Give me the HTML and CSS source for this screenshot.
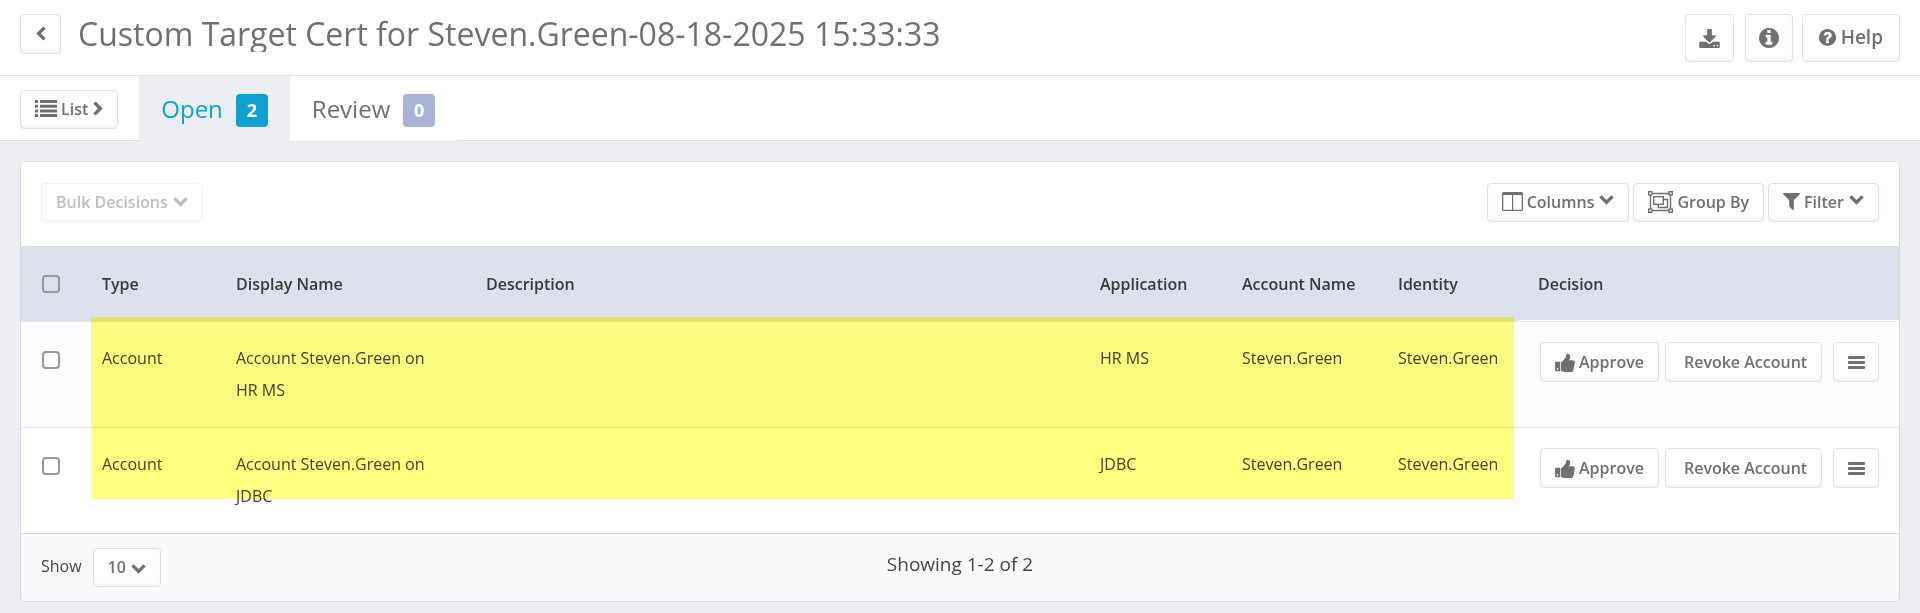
FILE: index.html
```html
<!DOCTYPE html>
<html lang="en">
<head>
<meta charset="UTF-8">
<meta name="viewport" content="width=device-width, initial-scale=1.0">
<title>Custom Target Cert for Steven.Green-08-18-2025 15:33:33</title>
<link rel="stylesheet" href="styles.css">
</head>
<body>

<!-- shared icons -->
<svg class="sprite" aria-hidden="true">
  <symbol id="chevron-down" viewBox="0 0 15 10"><path d="M0.3 2.6L2.6 0.3l4.9 4.8L12.4 0.3l2.3 2.3L7.5 9.8z"/></symbol>
  <symbol id="chevron-left" viewBox="0 0 10 15"><path d="M7.3 0.4L9.7 2.7 4.9 7.5l4.8 4.8-2.4 2.3L0.3 7.5z"/></symbol>
  <symbol id="chevron-right" viewBox="0 0 10 15"><path d="M2.7 0.4L0.3 2.7 5.1 7.5 0.3 12.3l2.4 2.3 7-7.1z"/></symbol>
  <symbol id="thumbs-up" viewBox="64 64 1600 1536"><path d="M320 1344q0-26-19-45t-45-19q-27 0-45.500 19t-18.500 45q0 27 18.500 45.500t45.500 18.500q26 0 45-18.500t19-45.500zm160-512v640q0 26-19 45t-45 19h-288q-26 0-45-19t-19-45v-640q0-26 19-45t45-19h288q26 0 45 19t19 45zm1184 0q0 86-55 149 15 44 15 76 3 76-43 137 17 56 0 117-15 57-54 94 9 112-49 181-64 76-197 78h-129q-66 0-144-15.500t-121.500-29-120.500-39.500q-123-43-158-44-26-1-45-19.500t-19-44.500v-641q0-25 18-43.500t43-20.500q24-2 76-59t101-121q68-87 101-120 18-18 31-48t17.500-48.500 13.500-60.500q7-39 12.500-61t19.500-52 34-50q19-19 45-19 46 0 82.500 10.500t60 26 40 40.500 24 45 12 50 5 45 .5 39q0 38-9.500 76t-19 60-27.500 56q-3 6-10 18t-11 22-8 24h277q78 0 135 57t57 135z"/></symbol>
  <symbol id="bars" viewBox="0 0 17 15"><rect y="1" width="17" height="3" rx="1"/><rect y="6" width="17" height="3" rx="1"/><rect y="11" width="17" height="3" rx="1"/></symbol>
</svg>

<header class="page-header">
  <button class="btn btn-back" aria-label="Back"><svg class="icon-chevron-side"><use href="#chevron-left"/></svg></button>
  <h1>Custom Target Cert for Steven.Green-08-18-2025 15:33:33</h1>
  <div class="header-actions">
    <button class="btn btn-header" aria-label="Download">
      <svg width="21" height="19" viewBox="64 0 1664 1536"><path d="M1344 1344q0-26-19-45t-45-19-45 19-19 45 19 45 45 19 45-19 19-45zm256 0q0-26-19-45t-45-19-45 19-19 45 19 45 45 19 45-19 19-45zm128-224v320q0 40-28 68t-68 28h-1472q-40 0-68-28t-28-68v-320q0-40 28-68t68-28h465l135 136q58 56 136 56t136-56l136-136h464q40 0 68 28t28 68zm-325-569q17 41-14 70l-448 448q-18 19-45 19t-45-19l-448-448q-31-29-14-70 17-39 59-39h256v-448q0-26 19-45t45-19h256q26 0 45 19t19 45v448h256q42 0 59 39z"/></svg>
    </button>
    <button class="btn btn-header btn-info" aria-label="Information">
      <svg width="20" height="20" viewBox="128 128 1536 1536"><path d="M1152 1376v-160q0-14-9-23t-23-9h-96v-512q0-14-9-23t-23-9h-320q-14 0-23 9t-9 23v160q0 14 9 23t23 9h96v320h-96q-14 0-23 9t-9 23v160q0 14 9 23t23 9h448q14 0 23-9t9-23zm-128-896v-160q0-14-9-23t-23-9h-192q-14 0-23 9t-9 23v160q0 14 9 23t23 9h192q14 0 23-9t9-23zm640 416q0 209-103 385.500t-279.500 279.500-385.500 103-385.500-103-279.500-279.500-103-385.500 103-385.500 279.500-279.500 385.500-103 385.500 103 279.500 279.500 103 385.500z"/></svg>
    </button>
    <button class="btn btn-header btn-help">
      <svg width="17" height="17" viewBox="128 128 1536 1536"><path d="M1024 1376v-192q0-14-9-23t-23-9h-192q-14 0-23 9t-9 23v192q0 14 9 23t23 9h192q14 0 23-9t9-23zm256-672q0-88-55.500-163t-138.500-116-170-41q-243 0-371 213-15 24 8 42l132 100q7 6 19 6 16 0 25-12 53-68 86-92 34-24 86-24 48 0 85.500 26t37.500 59q0 38-20 61t-68 45q-63 28-115.500 86.500t-52.500 125.500v36q0 14 9 23t23 9h192q14 0 23-9t9-23q0-19 21.500-49.500t54.500-49.500q32-18 49-28.500t46-35 44.500-48 28-60.500 12.500-81zm384 192q0 209-103 385.500t-279.500 279.500-385.500 103-385.500-103-279.500-279.500-103-385.500 103-385.500 279.500-279.500 385.500-103 385.500 103 279.500 279.500 103 385.500z"/></svg>
      Help
    </button>
  </div>
</header>

<nav class="tab-bar">
  <button class="btn">
    <svg width="22" height="17" viewBox="0 0 22 17"><path d="M0 0h3v3H0zM5 0h17v3H5zM0 4.700h3v3H0zM5 4.700h17v3H5zM0 9.400h3v3H0zM5 9.400h17v3H5zM0 14h3v3H0zM5 14h17v3H5z"/></svg>
    List
    <svg class="icon-chevron-side icon-after"><use href="#chevron-right"/></svg>
  </button>
  <div class="tabs">
    <a class="tab active" href="#open">Open <span class="badge">2</span></a>
    <a class="tab" href="#review">Review <span class="badge">0</span></a>
  </div>
</nav>

<main class="panel">
  <div class="toolbar">
    <button class="btn" disabled>Bulk Decisions <svg class="icon-chevron icon-after"><use href="#chevron-down"/></svg></button>
    <div class="toolbar-actions">
      <button class="btn">
        <svg width="21" height="19" viewBox="0 0 21 19"><path fill-rule="evenodd" d="M1.500 0h18A1.500 1.500 0 0 1 21 1.500v16a1.500 1.500 0 0 1-1.500 1.500h-18A1.500 1.500 0 0 1 0 17.500v-16A1.500 1.500 0 0 1 1.500 0zM1.300 3v14.200q0 .5.500.5H10V3zM11.200 3v14.700h8q.5 0 .5-.5V3z"/></svg>
        Columns
        <svg class="icon-chevron icon-after"><use href="#chevron-down"/></svg>
      </button>
      <button class="btn">
        <svg class="icon-group" width="25" height="22" viewBox="0 0 25 22"><path d="M4 2.500h17M4 19.500h17M2.500 4v14M22.500 4v14"/><rect x=".7" y=".7" width="3.200" height="3.200"/><rect x="21.100" y=".7" width="3.200" height="3.200"/><rect x=".7" y="18.100" width="3.200" height="3.200"/><rect x="21.100" y="18.100" width="3.200" height="3.200"/><rect x="5.700" y="5.700" width="9.600" height="7.600"/><path d="M15.300 8.500h4.200v8h-9.200v-3.200"/></svg>
        Group By
      </button>
      <button class="btn">
        <svg width="17" height="17" viewBox="191 256 1410 1408"><path d="M1595 295q17 41-14 70l-493 493v742q0 42-39 59-13 5-25 5-27 0-45-19l-256-256q-19-19-19-45v-486l-493-493q-31-29-14-70 17-39 59-39h1280q42 0 59 39z"/></svg>
        Filter
        <svg class="icon-chevron icon-after"><use href="#chevron-down"/></svg>
      </button>
    </div>
  </div>

  <div class="table-wrap">
    <table>
      <colgroup>
        <col class="col-check">
        <col class="col-type">
        <col class="col-name">
        <col>
        <col class="col-app">
        <col class="col-account">
        <col class="col-identity">
        <col class="col-decision">
      </colgroup>
      <thead>
        <tr>
          <th><input type="checkbox" aria-label="Select all"></th>
          <th>Type</th>
          <th>Display Name</th>
          <th>Description</th>
          <th>Application</th>
          <th>Account Name</th>
          <th>Identity</th>
          <th class="decision">Decision</th>
        </tr>
      </thead>
      <tbody>
        <tr>
          <td><input type="checkbox" aria-label="Select Account Steven.Green on HR MS"></td>
          <td>Account</td>
          <td class="name">Account Steven.Green on HR MS</td>
          <td></td>
          <td>HR MS</td>
          <td>Steven.Green</td>
          <td>Steven.Green</td>
          <td class="decision">
            <div class="decision-buttons">
              <button class="btn"><svg width="20" height="19"><use href="#thumbs-up"/></svg> Approve</button>
              <button class="btn btn-revoke">Revoke Account</button>
              <button class="btn btn-menu" aria-label="More actions"><svg width="17" height="15"><use href="#bars"/></svg></button>
            </div>
          </td>
        </tr>
        <tr>
          <td><input type="checkbox" aria-label="Select Account Steven.Green on JDBC"></td>
          <td>Account</td>
          <td class="name">Account Steven.Green on JDBC</td>
          <td></td>
          <td>JDBC</td>
          <td>Steven.Green</td>
          <td>Steven.Green</td>
          <td class="decision">
            <div class="decision-buttons">
              <button class="btn"><svg width="20" height="19"><use href="#thumbs-up"/></svg> Approve</button>
              <button class="btn btn-revoke">Revoke Account</button>
              <button class="btn btn-menu" aria-label="More actions"><svg width="17" height="15"><use href="#bars"/></svg></button>
            </div>
          </td>
        </tr>
      </tbody>
    </table>
    <div class="highlight"></div>
  </div>

  <footer class="panel-footer">
    <div class="page-size">
      <label for="pageSize">Show</label>
      <div class="select-wrap">
        <select id="pageSize">
          <option>10</option>
          <option>25</option>
          <option>50</option>
        </select>
        <svg class="icon-chevron"><use href="#chevron-down"/></svg>
      </div>
    </div>
    <div class="showing">Showing 1-2 of 2</div>
  </footer>
</main>

</body>
</html>
```

FILE: styles.css
```css
* {
  box-sizing: border-box;
}

body {
  margin: 0;
  background: #edeef2;
  color: #444;
  font-family: "Open Sans", "Noto Sans", sans-serif;
  font-size: 16px;
  line-height: 32px;
}

svg {
  fill: #707070;
  flex: none;
}

.sprite {
  display: none;
}

.icon-chevron {
  width: 15px;
  height: 10px;
}

.icon-chevron-side {
  width: 10px;
  height: 15px;
}

.icon-after {
  margin-left: 1px;
}

.icon-group {
  fill: none;
  stroke: #707070;
  stroke-width: 1.4;
}

/* buttons */
.btn {
  display: inline-flex;
  align-items: center;
  justify-content: center;
  gap: 4px;
  height: 39px;
  padding: 0 14px 2px;
  border: 1px solid #dde0e8;
  border-radius: 4px;
  background: #fff;
  box-shadow: inset 0 -2px 2px #f4f4f6;
  color: #707070;
  font: 600 16px/24px "Open Sans", "Noto Sans", sans-serif;
  white-space: nowrap;
  cursor: pointer;
}

.btn:disabled {
  opacity: 0.45;
  cursor: default;
}

/* header */
.page-header {
  display: flex;
  align-items: flex-start;
  padding: 14px 20px 13px;
  border-bottom: 1px solid #e1e2e6;
  background: #fff;
}

.btn-back {
  width: 41px;
  height: 40px;
}

h1 {
  flex: 1;
  height: 38px;
  margin: 0 0 0 17px;
  overflow: hidden;
  color: #707070;
  font-size: 32px;
  font-weight: 400;
  line-height: 40px;
  white-space: nowrap;
}

.header-actions {
  display: flex;
}

.btn-header {
  height: 48px;
  padding: 0 13px;
  font-size: 19px;
}

.btn-info {
  margin: 0 9px 0 11px;
}

.btn-help {
  gap: 5px;
  padding: 0 16px 2px;
}

/* tabs */
.tab-bar {
  display: flex;
  align-items: flex-start;
  border-bottom: 1px solid #dcdcdc;
  background: #fff;
}

.tab-bar .btn {
  margin: 14px 21px 0 20px;
}

.tabs {
  display: flex;
  margin-bottom: -2px;
}

.tab {
  display: flex;
  align-items: center;
  gap: 13px;
  height: 66px;
  padding: 0 22px;
  border-bottom: 1px solid #e1e2e6;
  background: #fff;
  color: #707070;
  font-size: 24px;
  text-decoration: none;
}

.tab.active {
  border-color: #edeef2;
  background: #edeef2;
  color: #11a1d0;
}

.badge {
  width: 32px;
  height: 33px;
  margin-top: 3px;
  border-radius: 4px;
  background: #a8b3d5;
  color: #fff;
  font-size: 18px;
  font-weight: 700;
  line-height: 33px;
  text-align: center;
}

.active .badge {
  background: #11a1d0;
}

/* main panel */
.panel {
  margin: 20px 20px 0;
  border: 1px solid #d8dbe4;
  border-radius: 5px;
  background: #fff;
  overflow: hidden;
}

.toolbar {
  display: flex;
  justify-content: space-between;
  padding: 21px 20px 24px;
}

.toolbar-actions {
  display: flex;
  gap: 4px;
}

.toolbar-actions .icon-chevron {
  margin-bottom: 3px;
}

.table-wrap {
  position: relative;
}

table {
  width: 100%;
  border-collapse: separate;
  border-spacing: 0;
  table-layout: fixed;
}

.col-check { width: 71px; }
.col-type { width: 134px; }
.col-name { width: 250px; }
.col-app { width: 142px; }
.col-account { width: 156px; }
.col-identity { width: 130px; }
.col-decision { width: 381px; }

th {
  height: 75px;
  padding: 0 10px;
  border-top: 1px solid #d5dae3;
  background: #dde1ee;
  color: #3a3a3a;
  font-weight: 600;
  text-align: left;
}

td {
  height: 106px;
  padding: 20px 10px;
  border-top: 1px solid #e6e8ec;
  vertical-align: top;
}

th:first-child,
td:first-child {
  padding-left: 21px;
}

tbody tr:first-child td {
  background: #fcfdff;
}

.name {
  padding-right: 40px;
}

.decision {
  padding-left: 20px;
  padding-right: 20px;
}

th.decision {
  border-bottom: 1px solid #fff;
}

.decision-buttons {
  display: flex;
  padding-left: 2px;
}

.decision-buttons .btn {
  height: 40px;
  padding-bottom: 0;
}

.btn-revoke {
  margin-left: 6px;
  padding-left: 18px;
}

.decision-buttons .btn-menu {
  width: 46px;
  margin-left: auto;
}

input[type="checkbox"] {
  appearance: none;
  display: block;
  width: 18px;
  height: 18px;
  margin: 0;
  border: 2px solid #999;
  border-radius: 4px;
  background: transparent;
}

td input[type="checkbox"] {
  margin-top: 9px;
}

/* marker over the account details */
.highlight {
  position: absolute;
  top: 71px;
  right: 385px;
  bottom: 34px;
  left: 70px;
  background: #ffff80;
  mix-blend-mode: multiply;
  pointer-events: none;
}

/* footer */
.panel-footer {
  display: grid;
  grid-template-columns: 1fr auto 1fr;
  padding: 14px 20px;
  border-top: 1px solid #d8dbe4;
  background: #f9fafc;
}

.page-size {
  display: flex;
  gap: 11px;
  line-height: 36px;
}

.select-wrap {
  position: relative;
  display: flex;
}

select {
  appearance: none;
  width: 68px;
  height: 39px;
  padding: 0 14px 2px;
  border: 1px solid #dde0e8;
  border-radius: 4px;
  background: #fff;
  box-shadow: inset 0 -2px 2px #f4f4f6;
  color: #707070;
  font: 600 16px/24px "Open Sans", "Noto Sans", sans-serif;
}

.select-wrap .icon-chevron {
  position: absolute;
  top: 16px;
  right: 15px;
  pointer-events: none;
}

.showing {
  font-size: 19px;
}
```
